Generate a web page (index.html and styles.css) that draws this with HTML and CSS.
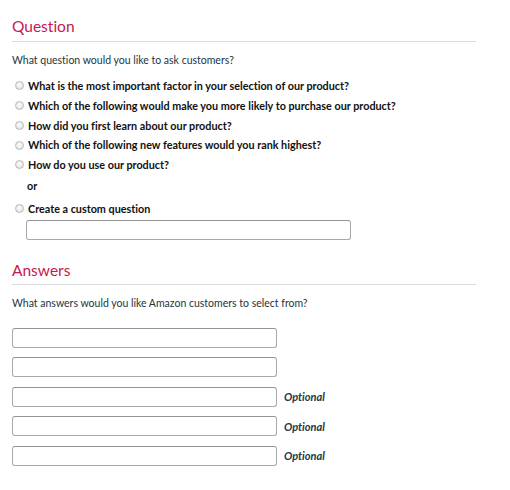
FILE: index.html
```html
<!DOCTYPE html>
<html>
<head>
<meta charset="utf-8">
<link rel="stylesheet" href="styles.css">
</head>
<body>
<div class="page">
  <section class="section">
    <h2 class="title">Question</h2>
    <p class="prompt">What question would you like to ask customers?</p>
    <ul class="options">
      <li class="option"><span class="radio"></span>What is the most important factor in your selection of our product?</li>
      <li class="option"><span class="radio"></span>Which of the following would make you more likely to purchase our product?</li>
      <li class="option"><span class="radio"></span>How did you first learn about our product?</li>
      <li class="option"><span class="radio"></span>Which of the following new features would you rank highest?</li>
      <li class="option"><span class="radio"></span>How do you use our product?</li>
    </ul>
    <div class="or">or</div>
    <div class="option custom"><span class="radio"></span>Create a custom question</div>
    <div class="custom-input"><span class="field wide"></span></div>
  </section>
  <section class="section answers">
    <h2 class="title">Answers</h2>
    <p class="prompt">What answers would you like Amazon customers to select from?</p>
    <div class="answer-list">
      <div class="answer"><span class="field"></span></div>
      <div class="answer"><span class="field"></span></div>
      <div class="answer"><span class="field"></span><span class="optional">Optional</span></div>
      <div class="answer"><span class="field"></span><span class="optional">Optional</span></div>
      <div class="answer"><span class="field"></span><span class="optional">Optional</span></div>
    </div>
  </section>
</div>
</body>
</html>
```
FILE: styles.css
```css
* { box-sizing: border-box; }
body {
  margin: 0;
  background: #fff;
  font-family: Lato, "Liberation Sans", sans-serif;
  font-variant-ligatures: none;
  color: #111;
}
.page {
  width: 476px;
  padding: 16px 0 0 12px;
}
.title {
  margin: 0;
  font-weight: 400;
  font-size: 15.5px;
  line-height: 20px;
  color: #c7184f;
  padding-bottom: 5px;
  border-bottom: 1px solid #dcdcdc;
}
.prompt {
  margin: 10px 0 0 0;
  font-size: 10.5px;
  line-height: 16px;
  color: #213640;
}
.options {
  list-style: none;
  margin: 10px 0 0 0;
  padding: 0;
  display: flex;
  flex-direction: column;
  gap: 4px;
}
.option {
  display: flex;
  align-items: center;
  font-size: 10.8px;
  font-weight: 700;
  line-height: 15.75px;
  color: #111;
}
.radio {
  width: 9px;
  height: 9px;
  border-radius: 50%;
  border: 1px solid #b8b8b8;
  background: radial-gradient(circle at 50% 40%, #fdfdfd 0%, #e6e6e6 70%, #d0d0d0 100%);
  margin: 0 4px 0 3px;
  flex: none;
}
.or {
  margin: 5px 0 0 15px;
  font-size: 10.8px;
  font-weight: 700;
  line-height: 16px;
}
.custom { margin-top: 7px; }
.custom-input { margin: 3px 0 0 14px; }
.field {
  display: block;
  width: 265px;
  height: 20px;
  border: 1px solid #a9a9a9;
  border-top-color: #949494;
  border-radius: 3px;
  background: #fff;
}
.field.wide { width: 325px; }
.answers { margin-top: 20px; }
.answers .title { padding-bottom: 4px; }
.answers .prompt { margin-top: 10px; }
.answer-list {
  margin-top: 17px;
  display: flex;
  flex-direction: column;
  gap: 9.6px;
}
.answer {
  display: flex;
  align-items: center;
}
.optional {
  margin-left: 7px;
  font-size: 11px;
  font-weight: 700;
  font-style: italic;
  color: #213640;
}
```
